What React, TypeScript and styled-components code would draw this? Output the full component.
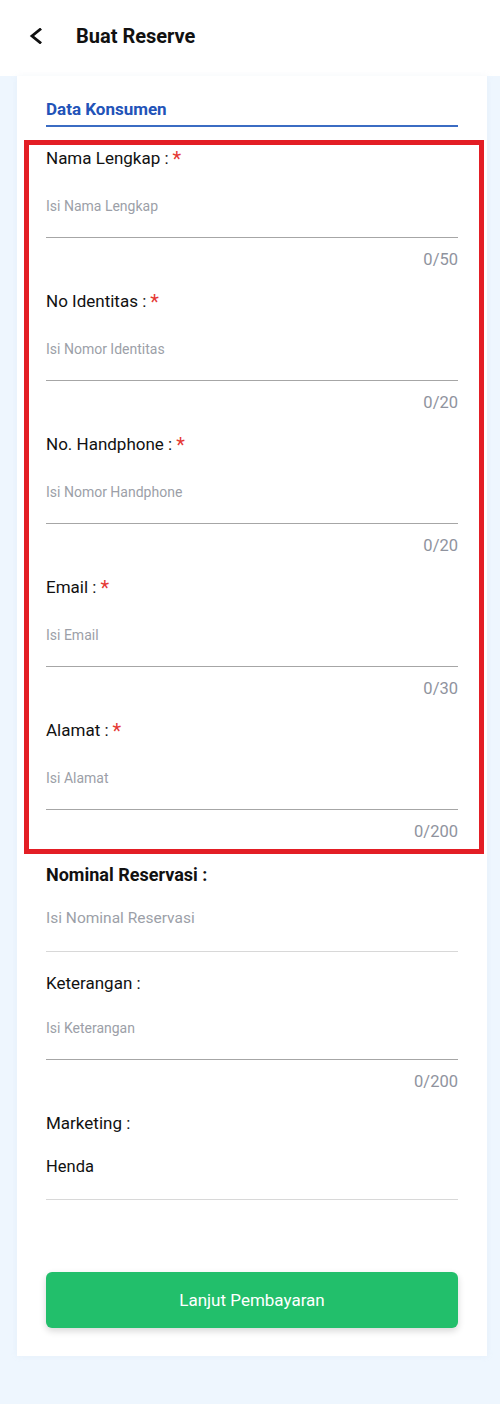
import styled, { createGlobalStyle } from "styled-components";

const GlobalStyle = createGlobalStyle`
  * {
    box-sizing: border-box;
  }
  body {
    margin: 0;
    background: #eef6fe;
    font-family: Roboto, "Noto Sans", Arial, sans-serif;
  }
`;

interface FieldData {
  label: string;
  placeholder: string;
  max: number;
}

const consumerFields: FieldData[] = [
  { label: "Nama Lengkap", placeholder: "Isi Nama Lengkap", max: 50 },
  { label: "No Identitas", placeholder: "Isi Nomor Identitas", max: 20 },
  { label: "No. Handphone", placeholder: "Isi Nomor Handphone", max: 20 },
  { label: "Email", placeholder: "Isi Email", max: 30 },
  { label: "Alamat", placeholder: "Isi Alamat", max: 200 },
];

const BackIcon = () => (
  <svg width="14" height="16" viewBox="0 0 14 16" fill="none">
    <polyline
      points="11,1.5 3,8 11,14.5"
      stroke="#111"
      strokeWidth="2.8"
      strokeLinecap="square"
      strokeLinejoin="miter"
    />
  </svg>
);

const App = () => {
  return (
    <Page>
      <GlobalStyle />
      <Header>
        <BackButton>
          <BackIcon />
        </BackButton>
        <Title>Buat Reserve</Title>
      </Header>
      <Card>
        <SectionTitle>Data Konsumen</SectionTitle>
        <Highlight>
          {consumerFields.map((f) => (
            <Field key={f.label}>
              <Label>
                {f.label} :<Star>*</Star>
              </Label>
              <Input $h={69} $pt={5} placeholder={f.placeholder} />
              <Counter>0/{f.max}</Counter>
            </Field>
          ))}
        </Highlight>

        <Field>
          <Label $bold $mt={9}>Nominal Reservasi :</Label>
          <Input $h={67} $size={15.5} $light placeholder="Isi Nominal Reservasi" />
        </Field>

        <Field>
          <Label $mt={20}>Keterangan :</Label>
          <Input $h={66} $pt={3} placeholder="Isi Keterangan" />
          <Counter>0/200</Counter>
        </Field>

        <Field>
          <Label $mt={20}>Marketing :</Label>
          <Input $h={66} $size={16.5} $light readOnly defaultValue="Henda" />
        </Field>

        <SubmitButton>Lanjut Pembayaran</SubmitButton>
      </Card>
    </Page>
  );
};
export default App;

const Page = styled.div`
  min-height: 1404px;
  background: #eef6fe;
`;

const Header = styled.header`
  height: 76px;
  background: #fff;
  display: flex;
  align-items: center;
  padding-left: 29px;
`;

const BackButton = styled.button`
  border: none;
  background: none;
  padding: 0;
  width: 14px;
  height: 16px;
  display: flex;
  margin-top: -4px;
`;

const Title = styled.h1`
  margin: -4px 0 0 33px;
  font-size: 20px;
  font-weight: 700;
  color: #111;
`;

const Card = styled.main`
  margin-left: 17px;
  width: 470px;
  background: #fff;
  padding: 22px 29px 28px 29px;
  display: flex;
  flex-direction: column;
  box-shadow: 0 0 6px rgba(180, 200, 220, 0.15);
`;

const SectionTitle = styled.h2`
  margin: 0;
  font-size: 17px;
  line-height: 22px;
  font-weight: 700;
  color: #2253b8;
  padding-bottom: 5px;
  border-bottom: 2px solid #3b6cc3;
`;

const Highlight = styled.div`
  margin: 13px -26px 0 -22px;
  padding: 2px 21px 7px 17px;
  border: 5px solid #e31e25;
  display: flex;
  flex-direction: column;
  gap: 20px;
`;

const Field = styled.div`
  display: flex;
  flex-direction: column;
`;

const Label = styled.label<{ $bold?: boolean; $mt?: number }>`
  display: flex;
  align-items: center;
  height: 22px;
  margin-top: ${(p) => p.$mt ?? 0}px;
  font-size: ${(p) => (p.$bold ? 18 : 17)}px;
  font-weight: ${(p) => (p.$bold ? 700 : 400)};
  color: #111;
  white-space: pre;
`;

const Star = styled.span`
  color: #e53935;
  font-size: 20px;
  margin-left: 4px;
  margin-top: 2px;
`;

const Input = styled.input<{ $h: number; $pt?: number; $size?: number; $light?: boolean }>`
  width: 100%;
  height: ${(p) => p.$h}px;
  padding: ${(p) => p.$pt ?? 0}px 0 0 0;
  border: none;
  border-bottom: 1.5px solid ${(p) => (p.$light ? "#d8d8d8" : "#a6a6a6")};
  outline: none;
  background: transparent;
  font-family: Roboto, "Noto Sans", Arial, sans-serif;
  font-size: ${(p) => p.$size ?? 14}px;
  color: #111;
  &::placeholder {
    color: #9c9fa8;
  }
`;

const Counter = styled.div`
  margin-top: 12px;
  height: 20px;
  line-height: 20px;
  text-align: right;
  font-size: 16.5px;
  color: #8f939e;
`;

const SubmitButton = styled.button`
  margin-top: 72px;
  height: 56px;
  border: none;
  border-radius: 6px;
  background: #22bf6b;
  color: #fff;
  font-family: Roboto, "Noto Sans", Arial, sans-serif;
  font-size: 17px;
  box-shadow: 0 3px 7px rgba(0, 0, 0, 0.16);
`;
